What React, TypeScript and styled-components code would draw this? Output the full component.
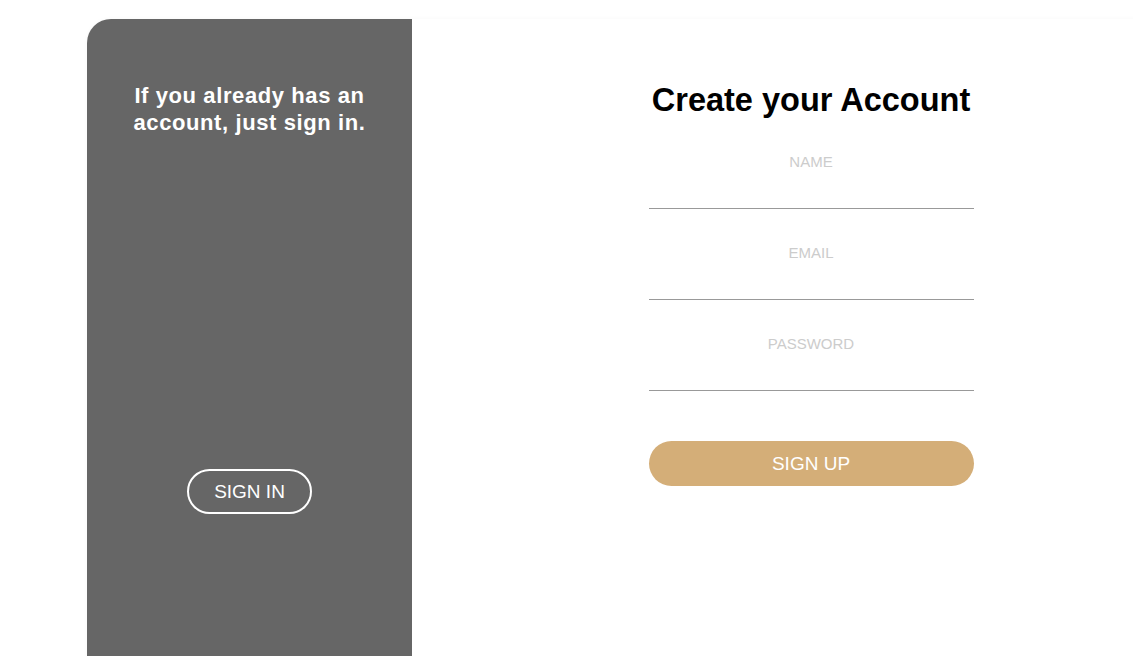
import React from "react";
import styled, { createGlobalStyle } from "styled-components";

const Global = createGlobalStyle`
  html, body {
    margin: 0;
    padding: 0;
    background: #ffffff;
    overflow: hidden;
    font-family: "Liberation Sans", Arial, sans-serif;
  }
  * { box-sizing: border-box; }
`;

const Page = styled.div`
  padding: 19px 0 0 87px;
  width: 1133px;
  height: 656px;
  overflow: hidden;
`;

const Card = styled.div`
  display: flex;
  width: 1123px;
  height: 720px;
  background: #ffffff;
  border-top-left-radius: 24px;
  box-shadow: 0 0 4px rgba(0, 0, 0, 0.035);
`;

const SidePanel = styled.aside`
  width: 325px;
  flex-shrink: 0;
  background: #666666;
  border-top-left-radius: 24px;
  display: flex;
  flex-direction: column;
  align-items: center;
  padding-top: 63px;
`;

const SideText = styled.h2`
  margin: 0;
  color: #ffffff;
  font-size: 22px;
  line-height: 27px;
  font-weight: 700;
  letter-spacing: 0.6px;
  text-align: center;
`;

const OutlineButton = styled.button`
  margin-top: 333px;
  width: 125px;
  height: 45px;
  border: 2px solid #ffffff;
  border-radius: 23px;
  background: transparent;
  color: #ffffff;
  font-family: "Liberation Sans", Arial, sans-serif;
  font-size: 19px;
  padding: 0;
  cursor: pointer;
`;

const FormPanel = styled.section`
  flex: 1;
  display: flex;
  flex-direction: column;
  align-items: center;
  padding-top: 62px;
`;

const Title = styled.h1`
  margin: 0;
  font-size: 32.5px;
  line-height: 39px;
  font-weight: 700;
  color: #000000;
`;

const Form = styled.form`
  width: 325px;
  display: flex;
  flex-direction: column;
  gap: 2px;
`;

const Input = styled.input`
  width: 100%;
  height: 89px;
  padding: 33px 0 39px;
  border: none;
  border-bottom: 1px solid #999999;
  outline: none;
  background: transparent;
  text-align: center;
  font-family: "Liberation Sans", Arial, sans-serif;
  font-size: 15px;
  line-height: 16px;
  color: #333;
  &::placeholder {
    color: #cccccc;
  }
`;

const SolidButton = styled.button`
  margin-top: 48px;
  width: 100%;
  height: 45px;
  border: none;
  border-radius: 23px;
  background: #d4ae78;
  color: #ffffff;
  font-family: "Liberation Sans", Arial, sans-serif;
  font-size: 19px;
  padding: 0;
  cursor: pointer;
`;

export default function App() {
  return (
    <>
      <Global />
      <Page>
        <Card>
          <SidePanel>
            <SideText>
              If you already has an
              <br />
              account, just sign in.
            </SideText>
            <OutlineButton type="button">SIGN IN</OutlineButton>
          </SidePanel>
          <FormPanel>
            <Title>Create your Account</Title>
            <Form onSubmit={(e) => e.preventDefault()}>
              <Input type="text" placeholder="NAME" />
              <Input type="email" placeholder="EMAIL" />
              <Input type="password" placeholder="PASSWORD" />
              <SolidButton type="submit">SIGN UP</SolidButton>
            </Form>
          </FormPanel>
        </Card>
      </Page>
    </>
  );
}
